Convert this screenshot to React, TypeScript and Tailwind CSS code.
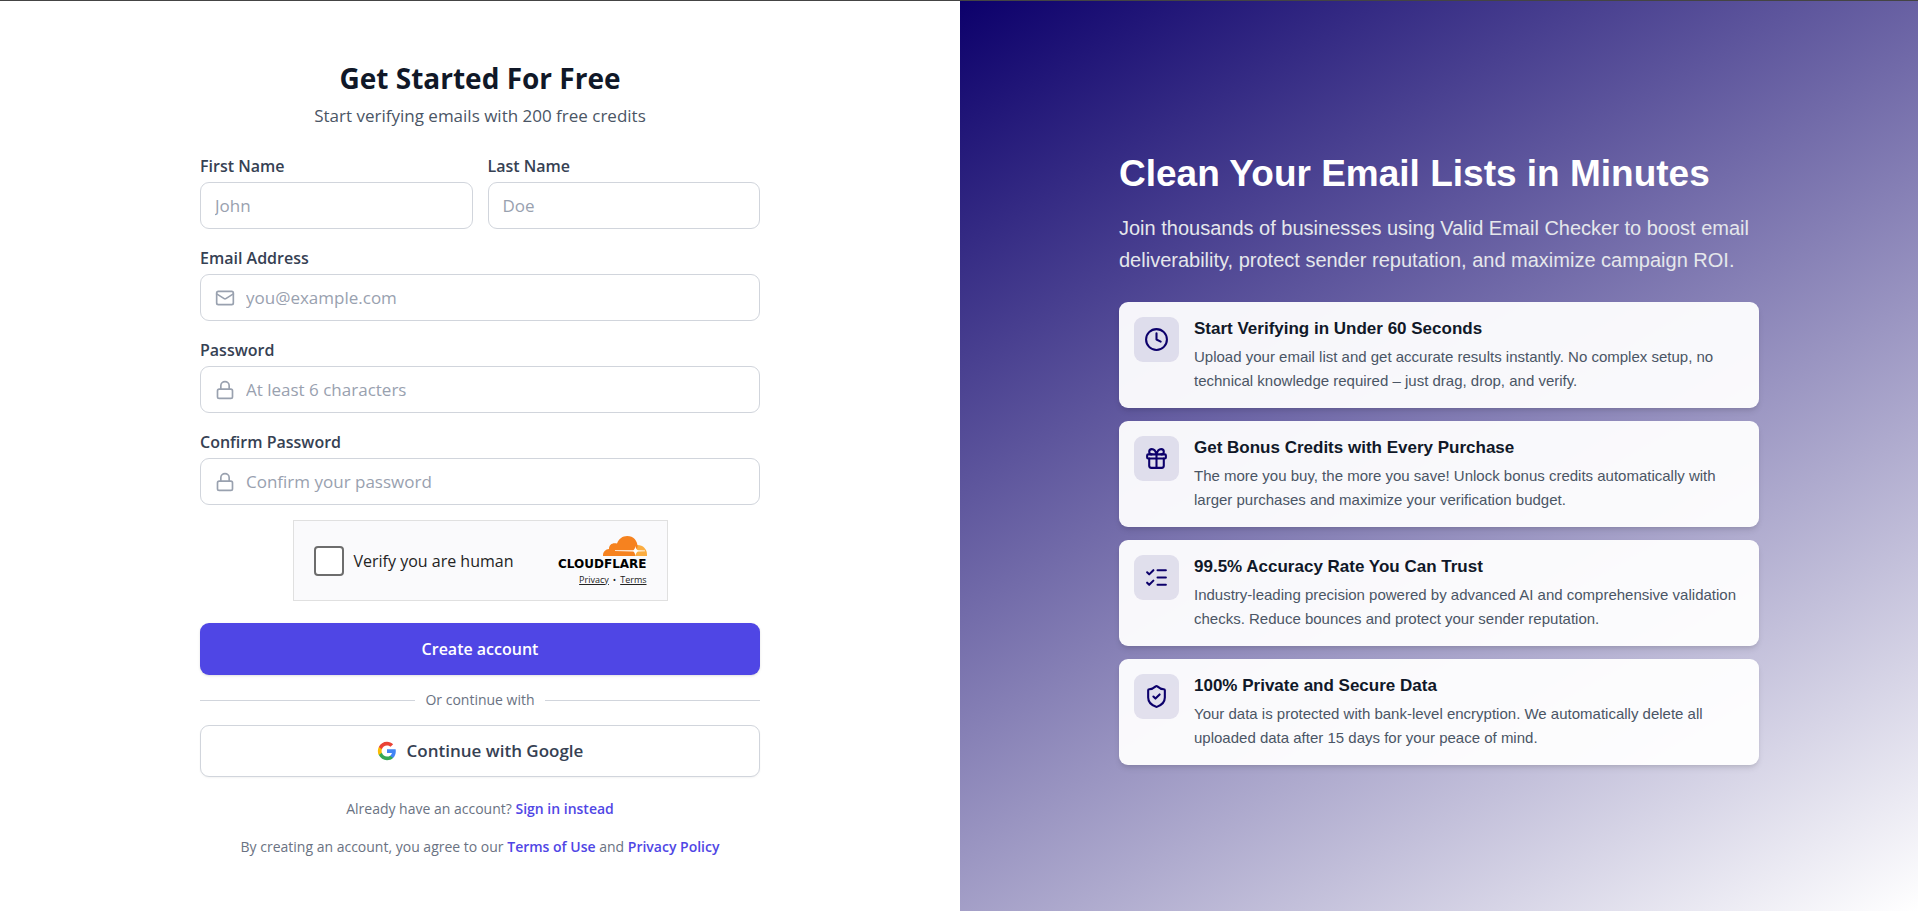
import type { ComponentType, ReactNode } from "react";
import { Clock, Gift, ListChecks, Lock, Mail, ShieldCheck } from "lucide-react";

const features = [
  {
    icon: Clock,
    title: "Start Verifying in Under 60 Seconds",
    text: "Upload your email list and get accurate results instantly. No complex setup, no technical knowledge required – just drag, drop, and verify.",
  },
  {
    icon: Gift,
    title: "Get Bonus Credits with Every Purchase",
    text: "The more you buy, the more you save! Unlock bonus credits automatically with larger purchases and maximize your verification budget.",
  },
  {
    icon: ListChecks,
    title: "99.5% Accuracy Rate You Can Trust",
    text: "Industry-leading precision powered by advanced AI and comprehensive validation checks. Reduce bounces and protect your sender reputation.",
  },
  {
    icon: ShieldCheck,
    title: "100% Private and Secure Data",
    text: "Your data is protected with bank-level encryption. We automatically delete all uploaded data after 15 days for your peace of mind.",
  },
];

type FieldProps = {
  id: string;
  label: string;
  placeholder: string;
  type?: string;
  icon?: ComponentType<{ className?: string; strokeWidth?: number }>;
};

function Field({ id, label, placeholder, type = "text", icon: Icon }: FieldProps) {
  return (
    <div className="flex-1">
      <label
        htmlFor={id}
        className="mb-1 block text-[16px] leading-6 font-semibold text-gray-700"
      >
        {label}
      </label>
      <div className="flex items-center gap-[11px] rounded-[9px] border border-gray-300 bg-white px-3.5 py-2.5 focus-within:ring-2 focus-within:ring-[#4f46e5]">
        {Icon && <Icon className="size-5 shrink-0 text-gray-400" strokeWidth={2} />}
        <input
          id={id}
          type={type}
          placeholder={placeholder}
          className="w-full min-w-0 text-[17px] leading-[25px] text-gray-900 placeholder-gray-400 outline-none"
        />
      </div>
    </div>
  );
}

function TextLink({ children }: { children: ReactNode }) {
  return (
    <a href="#" className="font-semibold text-[#4f46e5] hover:text-[#6366f1]">
      {children}
    </a>
  );
}

function GoogleIcon() {
  return (
    <svg viewBox="0 0 24 24" className="size-5" aria-hidden="true">
      <path
        fill="#4285F4"
        d="M22.56 12.25c0-.78-.07-1.53-.2-2.25H12v4.26h5.92c-.26 1.37-1.04 2.53-2.21 3.31v2.77h3.57c2.08-1.92 3.28-4.74 3.28-8.09z"
      />
      <path
        fill="#34A853"
        d="M12 23c2.97 0 5.46-.98 7.28-2.66l-3.57-2.77c-.98.66-2.23 1.06-3.71 1.06-2.86 0-5.29-1.93-6.16-4.53H2.18v2.84C3.99 20.53 7.7 23 12 23z"
      />
      <path
        fill="#FBBC05"
        d="M5.84 14.09c-.22-.66-.35-1.36-.35-2.09s.13-1.43.35-2.09V7.07H2.18C1.43 8.55 1 10.22 1 12s.43 3.45 1.18 4.93l2.85-2.22.81-.62z"
      />
      <path
        fill="#EA4335"
        d="M12 5.38c1.62 0 3.06.56 4.21 1.64l3.15-3.15C17.45 2.09 14.97 1 12 1 7.7 1 3.99 3.47 2.18 7.07l3.66 2.84c.87-2.6 3.3-4.53 6.16-4.53z"
      />
    </svg>
  );
}

function CloudIcon() {
  return (
    <svg viewBox="0 0 44 20" className="h-5 w-11" aria-hidden="true">
      <path fill="#fbad41" d="M33 9.2c6.2-.9 11 3.6 11 9.3V20H30z" />
      <path
        fill="#f6821f"
        d="M0 20c-.2-4 2.2-6.6 6-7-.3-4.3 3.8-7 8-5.4C16 2.7 19.5 0 24.2 0 30.5 0 34.5 4.8 34.6 10.5L32 20z"
      />
      <path
        fill="#fff"
        d="M12 14.3h18.2c1.2-.6 1.8-1.8 2.2-4.3.5 2.5 1.3 3.7 2.6 4.3l7 .2v.8l-7 .2c-1.3.5-2.1 1.7-2.6 4.5-.4-2.8-1-4-2.2-4.5l-18.2-.4z"
      />
    </svg>
  );
}

function HumanCheck() {
  return (
    <div className="mx-auto mt-[15px] flex h-[81px] w-[375px] items-center justify-between border border-[#e0e0e0] bg-[#fafafc] px-5">
      <label className="flex items-center gap-2.5 text-[16px] text-[#232323]">
        <input
          type="checkbox"
          className="size-[30px] appearance-none rounded border-2 border-[#6d6d6d] bg-white checked:bg-[#6d6d6d]"
        />
        Verify you are human
      </label>
      <div className="flex flex-col items-end">
        <CloudIcon />
        <span className="mt-0.5 font-['DejaVu_Sans'] text-[12px] leading-3 font-bold text-black">
          CLOUDFLARE
        </span>
        <span className="mt-1 flex gap-1 text-[9px] leading-3 text-[#232323]">
          <a href="#" className="underline">
            Privacy
          </a>
          •
          <a href="#" className="underline">
            Terms
          </a>
        </span>
      </div>
    </div>
  );
}

function SignUpForm() {
  return (
    <section className="flex justify-center bg-white px-6 pt-[57px] pb-8 font-['Open_Sans','Noto_Sans',sans-serif]">
      <div className="w-full max-w-[560px]">
        <h1 className="text-center text-[28px] leading-10 font-bold text-gray-900">
          Get Started For Free
        </h1>
        <p className="mt-1 text-center text-[17px] leading-7 text-gray-600">
          Start verifying emails with 200 free credits
        </p>

        <form className="mt-6">
          <div className="flex flex-col gap-[17px]">
            <div className="flex gap-[15px]">
              <Field id="first-name" label="First Name" placeholder="John" />
              <Field id="last-name" label="Last Name" placeholder="Doe" />
            </div>
            <Field
              id="email"
              label="Email Address"
              type="email"
              placeholder="you@example.com"
              icon={Mail}
            />
            <Field
              id="password"
              label="Password"
              type="password"
              placeholder="At least 6 characters"
              icon={Lock}
            />
            <Field
              id="confirm-password"
              label="Confirm Password"
              type="password"
              placeholder="Confirm your password"
              icon={Lock}
            />
          </div>

          <HumanCheck />

          <button
            type="submit"
            className="mt-[22px] flex h-[52px] w-full items-center justify-center rounded-[9px] bg-[#4f46e5] text-[16px] font-semibold text-white shadow-sm hover:bg-[#4338ca]"
          >
            Create account
          </button>

          <div className="my-3.5 flex items-center gap-2.5 text-[14px] leading-[22px] text-gray-500">
            <span className="h-px flex-1 bg-gray-300" />
            Or continue with
            <span className="h-px flex-1 bg-gray-300" />
          </div>

          <button
            type="button"
            className="flex h-[52px] w-full items-center justify-center gap-2.5 rounded-[9px] border border-gray-300 bg-white text-[17px] font-semibold text-gray-700 shadow-xs hover:bg-gray-50"
          >
            <GoogleIcon />
            Continue with Google
          </button>
        </form>

        <p className="mt-5 text-center text-[14px] leading-6 text-gray-500">
          Already have an account? <TextLink>Sign in instead</TextLink>
        </p>
        <p className="mt-3.5 text-center text-[14px] leading-6 text-gray-500">
          By creating an account, you agree to our{" "}
          <TextLink>Terms of Use</TextLink> and{" "}
          <TextLink>Privacy Policy</TextLink>
        </p>
      </div>
    </section>
  );
}

function FeaturePanel() {
  return (
    <section className="flex items-center justify-center bg-linear-[150deg] from-[#0c006b] to-white px-6 pt-1 font-['Liberation_Sans',Arial,sans-serif]">
      <div className="w-full max-w-[640px]">
        <h2 className="text-[37px] leading-[45px] font-bold text-white">
          Clean Your Email Lists in Minutes
        </h2>
        <p className="mt-4 text-[20px] leading-8 text-gray-200">
          Join thousands of businesses using Valid Email Checker to boost email
          deliverability, protect sender reputation, and maximize campaign ROI.
        </p>
        <ul className="mt-[26px] flex flex-col gap-[13px]">
          {features.map(({ icon: Icon, title, text }) => (
            <li
              key={title}
              className="flex items-start gap-[15px] rounded-[9px] bg-white/95 p-[15px] shadow-md"
            >
              <span className="flex size-[45px] shrink-0 items-center justify-center rounded-[9px] bg-[#0c006b]/10 text-[#0c006b]">
                <Icon className="size-[25px]" />
              </span>
              <div>
                <h3 className="text-[17px] leading-6 font-bold text-gray-900">
                  {title}
                </h3>
                <p className="mt-1 text-[15px] leading-6 text-gray-600">
                  {text}
                </p>
              </div>
            </li>
          ))}
        </ul>
      </div>
    </section>
  );
}

export default function App() {
  return (
    <main className="grid min-h-screen grid-cols-[960fr_958fr] border-t border-[#444]">
      <SignUpForm />
      <FeaturePanel />
    </main>
  );
}
